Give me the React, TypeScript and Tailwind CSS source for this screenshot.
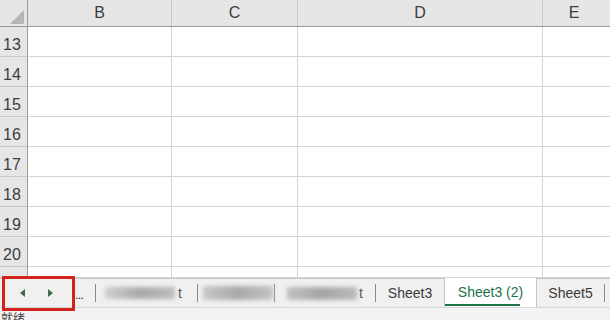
import React from "react";

const rows = [13, 14, 15, 16, 17, 18, 19, 20];

function Row({ n, h = "h-[30px]" }: { n?: number; h?: string }) {
  return (
    <div className={`grid grid-cols-[28px_144px_126px_245px_1fr] ${h}`}>
      <div className="bg-[#e6e6e6] border-r border-b border-r-[#9b9b9b] border-b-[#c8c8c8] flex items-end justify-center pr-[3px] pb-[2px] text-[16px] leading-[18px] text-[#3c3c3c]">
        {n ?? ""}
      </div>
      <div className="border-r border-b border-[#d4d4d4]" />
      <div className="border-r border-b border-[#d4d4d4]" />
      <div className="border-r border-b border-[#d4d4d4]" />
      <div className="border-b border-[#d4d4d4]" />
    </div>
  );
}

function Sep() {
  return <div className="w-px h-[18px] bg-[#8a8a8a] self-center" />;
}

export default function App() {
  return (
    <div
      className="relative w-[610px] h-[320px] overflow-hidden bg-white flex flex-col"
      style={{ fontFamily: '"Liberation Sans", "Noto Sans CJK SC", sans-serif' }}
    >
      {/* column headers */}
      <div className="grid grid-cols-[28px_144px_126px_245px_1fr] h-[27px] bg-[#e6e6e6] border-b border-[#9b9b9b] text-[16px] text-[#3c3c3c]">
        <div className="border-r border-[#9b9b9b] relative">
          <svg className="absolute left-[10px] top-[10px]" width="14" height="14" viewBox="0 0 14 14">
            <polygon points="14,0 14,14 0,14" fill="#b6b6b6" />
          </svg>
        </div>
        <div className="border-r border-[#c8c8c8] flex items-center justify-center">B</div>
        <div className="border-r border-[#c8c8c8] flex items-center justify-center">C</div>
        <div className="border-r border-[#c8c8c8] flex items-center justify-center">D</div>
        <div className="flex items-center justify-center pr-[5px]">E</div>
      </div>
      {rows.map((n) => (
        <Row key={n} n={n} />
      ))}
      <Row h="h-[11px]" />

      {/* sheet tabs bar */}
      <div className="h-[29px] bg-[#f0f0f0] border-t border-[#c6c6c6] flex items-stretch text-[14px] text-[#3a3a3a] relative">
        <div className="w-[75px] flex items-center">
          <svg className="ml-[20px]" width="6" height="8" viewBox="0 0 6 8">
            <polygon points="5,0 5,8 0,4" fill="#3d6b4a" />
          </svg>
          <svg className="ml-[22px]" width="6" height="8" viewBox="0 0 6 8">
            <polygon points="0,0 0,8 5,4" fill="#3d6b4a" />
          </svg>
        </div>
        <div className="w-[20px] flex items-center pt-[4px] text-[13px] tracking-[-1px] text-[#333]">...</div>
        <Sep />
        <div className="w-[101px] flex items-center pl-[9px]">
          <div className="w-[70px] h-[12px] bg-gradient-to-r from-[#cfcfcf] via-[#a9a9a9] to-[#bdbdbd] blur-[2px]" />
          <span className="ml-[3px] text-[#555]">t</span>
        </div>
        <Sep />
        <div className="w-[76px] flex items-center pl-[5px]">
          <div className="w-[70px] h-[14px] bg-gradient-to-r from-[#c8c8c8] via-[#a8a8a8] to-[#c4c4c4] blur-[2px]" />
        </div>
        <Sep />
        <div className="w-[100px] flex items-center pl-[12px]">
          <div className="w-[70px] h-[13px] bg-gradient-to-r from-[#c0c0c0] via-[#a5a5a5] to-[#bbbbbb] blur-[2px]" />
          <span className="ml-[2px] text-[#555]">t</span>
        </div>
        <Sep />
        <div className="w-[68px] flex items-center justify-center">Sheet3</div>
        <div className="w-[93px] -mt-px bg-white border-x border-[#c6c6c6] flex flex-col items-center justify-center relative text-[#217346]">
          <span>Sheet3 (2)</span>
          <div className="absolute left-0 bottom-[1px] w-[75px] h-[2px] bg-[#217346]" />
        </div>
        <div className="w-[67px] flex items-center justify-center">Sheet5</div>
        <Sep />
        <div className="flex-1" />
      </div>

      {/* status bar */}
      <div className="flex-1 bg-[#f3f3f3] border-t border-[#d6d6d6] relative">
        <span className="absolute left-[1px] top-[3px] text-[12px] leading-[14px] text-[#444]" style={{ fontFamily: '"Noto Sans CJK SC", sans-serif' }}>
          就绪
        </span>
      </div>

      {/* red annotation box */}
      <div className="absolute left-[2px] top-[276px] w-[73px] h-[35px] border-[3px] border-[#d6221f]" />
    </div>
  );
}
